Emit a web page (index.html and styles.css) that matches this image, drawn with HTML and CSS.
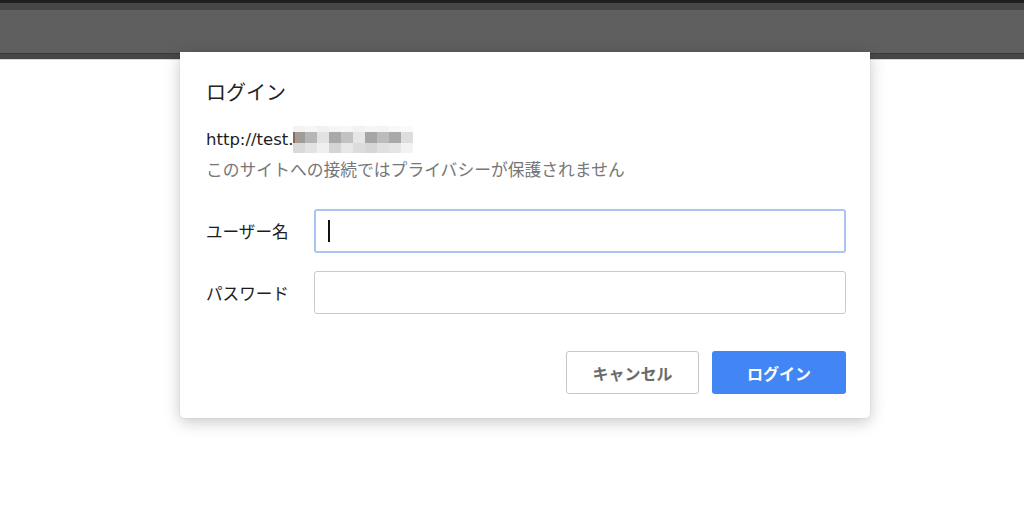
FILE: index.html
```html
<!DOCTYPE html>
<html lang="ja">

<head>
    <meta charset="UTF-8">
    <meta name="viewport" content="width=device-width, initial-scale=1.0">
    <title>ログイン</title>
    <link rel="stylesheet" href="styles.css">
</head>

<body>
    <!-- Browser toolbar -->
    <div class="toolbar">
        <div class="toolbar-top"></div>
        <div class="toolbar-main"></div>
        <div class="toolbar-bottom"></div>
    </div>

    <div class="page"></div>

    <!-- Auth dialog -->
    <div class="dialog">
        <h2 class="dialog-title">ログイン</h2>
        <div class="dialog-url">
            <span>http://test.</span>
            <span class="mosaic">
                <span class="row row-top">
                    <i style="background:#f3f3f3"></i><i style="background:#f6f6f6"></i><i style="background:#f1f1f1"></i><i style="background:#f5f5f5"></i><i style="background:#f7f7f7"></i><i style="background:#f2f2f2"></i><i style="background:#f6f6f6"></i><i style="background:#f4f4f4"></i><i style="background:#f8f8f8"></i><i style="background:#fafafa"></i>
                </span>
                <span class="row row-mid">
                    <i style="background:#a29c98"></i><i style="background:#b6b6b6"></i><i style="background:#e2e2e2"></i><i style="background:#a9a9a9"></i><i style="background:#c2c2c2"></i><i style="background:#e6e6e6"></i><i style="background:#a6a5a7"></i><i style="background:#bcbcbc"></i><i style="background:#a9a9a9"></i><i style="background:#dedede"></i>
                </span>
                <span class="row row-bot">
                    <i style="background:#d9d9d9"></i><i style="background:#e3e3e3"></i><i style="background:#efefef"></i><i style="background:#d4d4d4"></i><i style="background:#e7e7e7"></i><i style="background:#dcdcdc"></i><i style="background:#d6d6d6"></i><i style="background:#e0e0e0"></i><i style="background:#e5e5e5"></i><i style="background:#f2f2f2"></i>
                </span>
            </span>
        </div>
        <p class="dialog-note">このサイトへの接続ではプライバシーが保護されません</p>

        <div class="form">
            <div class="form-row">
                <label>ユーザー名</label>
                <div class="field focused"><span class="caret"></span></div>
            </div>
            <div class="form-row">
                <label>パスワード</label>
                <div class="field"></div>
            </div>
        </div>

        <div class="actions">
            <button class="btn btn-cancel">キャンセル</button>
            <button class="btn btn-login">ログイン</button>
        </div>
    </div>
</body>

</html>
```

FILE: styles.css
```css
body {
    font-family: "Noto Sans CJK JP", "Liberation Sans", sans-serif;
    background-color: #fff;
    margin: 0;
    padding: 0;
    height: 507px;
    overflow: hidden;
}

/* Browser toolbar */
.toolbar-top {
    height: 3px;
    background-color: #1f1f20;
}

.toolbar-main {
    height: 51px;
    box-sizing: border-box;
    background-color: #5f5f5f;
    border-top: 7px solid #474747;
    border-bottom: 1px solid #3b3b3b;
}

.toolbar-bottom {
    height: 5px;
    background-color: #474747;
    border-bottom: 1px solid #d9d9d9;
}

/* Dialog */
.dialog {
    position: absolute;
    top: 52px;
    left: 180px;
    width: 690px;
    box-sizing: border-box;
    padding: 28px 24px 24px 26px;
    background-color: #fff;
    border-radius: 0 0 4px 4px;
    box-shadow: 0 4px 16px rgba(0, 0, 0, 0.22), 0 0 1px rgba(0, 0, 0, 0.3);
    color: #222;
}

.dialog-title {
    margin: 0;
    font-size: 20px;
    font-weight: normal;
    line-height: 24px;
}

.dialog-url {
    display: flex;
    align-items: center;
    margin-top: 21px;
    height: 28px;
    font-family: "DejaVu Sans", sans-serif;
    font-size: 16.5px;
    color: #1d1d1d;
}

.mosaic {
    display: flex;
    flex-direction: column;
}

.mosaic .row {
    display: flex;
}

.mosaic i {
    display: block;
    width: 12px;
}

.row-top i {
    height: 6px;
}

.row-mid i {
    height: 11px;
}

.row-bot i {
    height: 10px;
}

.row-mid i:first-child {
    border-left: 2px solid #8a6a55;
    width: 10px;
}

.dialog-note {
    margin: 5px 0 0;
    font-size: 16.8px;
    line-height: 22px;
    color: #777;
}

/* Form */
.form {
    margin-top: 29px;
    display: flex;
    flex-direction: column;
    gap: 18px;
}

.form-row {
    display: flex;
    align-items: center;
}

.form-row label {
    width: 108px;
    flex-shrink: 0;
    font-size: 16.6px;
    color: #1d1d1d;
}

.field {
    flex: 1;
    height: 43px;
    box-sizing: border-box;
    border: 1px solid #c9c9c9;
    border-radius: 3px;
    display: flex;
    align-items: center;
    padding-left: 12px;
}

.field.focused {
    height: 44px;
    border: 2px solid #a9c6f3;
}

.caret {
    display: block;
    width: 1.5px;
    height: 22px;
    background-color: #111;
}

/* Buttons */
.actions {
    display: flex;
    justify-content: flex-end;
    gap: 13px;
    margin-top: 37px;
}

.btn {
    width: 134px;
    height: 43px;
    border-radius: 3px;
    font-family: "Noto Sans CJK JP", sans-serif;
    font-size: 16px;
    font-weight: bold;
    cursor: pointer;
}

.btn-cancel {
    width: 133px;
    background-color: #fff;
    border: 1px solid #c6c6c6;
    color: #6b6b6b;
}

.btn-login {
    background-color: #4285f4;
    border: none;
    color: #fff;
}
```
